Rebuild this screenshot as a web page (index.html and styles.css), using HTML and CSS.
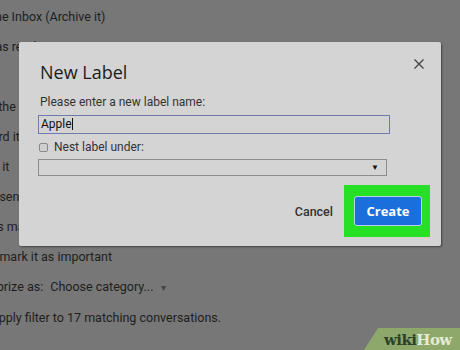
FILE: index.html
```html
<!DOCTYPE html>
<html lang="en">
<head>
  <meta charset="UTF-8">
  <title>New Label</title>
  <link rel="stylesheet" href="styles.css">
</head>
<body>

  <ul class="filters">
    <li>Skip the Inbox (Archive it)</li>
    <li>Mark as read</li>
    <li>Star it</li>
    <li>Apply the label:</li>
    <li>Forward it</li>
    <li>Delete it</li>
    <li>Never send it to Spam</li>
    <li>Always mark it as important</li>
    <li>Never mark it as important</li>
    <li>Categorize as: <span class="category">Choose category... <span class="caret">&#9662;</span></span></li>
    <li>Also apply filter to 17 matching conversations.</li>
  </ul>

  <div class="dialog">
    <h2 class="dialog-title">New Label</h2>
    <svg class="close" width="10" height="10" viewBox="0 0 10 10">
      <path d="M0.5 0.5 L9.5 9.5 M9.5 0.5 L0.5 9.5" stroke="#444" stroke-width="1.3"/>
    </svg>

    <div class="field-label">Please enter a new label name:</div>
    <div class="text-input">Apple<span class="cursor"></span></div>

    <div class="nest-row">
      <span class="checkbox"></span>
      <span>Nest label under:</span>
    </div>
    <div class="select"><span class="arrow">&#9660;</span></div>

    <div class="dialog-footer">
      <button class="cancel">Cancel</button>
      <div class="highlight">
        <button class="create">Create</button>
      </div>
    </div>
  </div>

  <div class="wikihow"><span class="wiki">wiki</span><span class="how">How</span></div>

</body>
</html>
```

FILE: styles.css
```css
body {
  margin: 0;
  padding: 0;
  width: 460px;
  height: 350px;
  overflow: hidden;
  background-color: #777777;
  font-family: Roboto, "Liberation Sans", sans-serif;
  position: relative;
}

.filters {
  list-style: none;
  margin: 0 0 0 -36px;
  padding: 2px 0 0 0;
  font-size: 12.5px;
  line-height: 30px;
  color: #1e1e1e;
  white-space: nowrap;
}

.category {
  margin-left: 4px;
}

.caret {
  font-size: 10px;
  color: #444;
  margin-left: 4px;
}

/* dialog */
.dialog {
  position: absolute;
  left: 19px;
  top: 42px;
  width: 384px;
  padding: 18px 19px 9px 19px;
  background-color: #d4d4d4;
  box-shadow: 1px 1px 2px rgba(0, 0, 0, 0.45);
  border-radius: 2px;
  color: #222;
}

.dialog-title {
  margin: 0;
  padding-left: 2px;
  font-family: "Open Sans", Roboto, sans-serif;
  font-weight: normal;
  font-size: 18px;
  line-height: 24px;
  color: #1c1c1c;
}

.close {
  position: absolute;
  top: 17px;
  right: 17px;
}

.field-label {
  margin-top: 11px;
  padding-left: 2px;
  font-size: 12px;
  line-height: 15px;
  color: #333;
}

.text-input {
  margin-top: 5px;
  width: 346px;
  height: 15px;
  padding: 1px 2px;
  border: 1px solid #6f7cab;
  font-size: 12px;
  line-height: 15px;
  color: #111;
}

.cursor {
  display: inline-block;
  width: 1px;
  height: 12px;
  background-color: #111;
  vertical-align: -2px;
}

.nest-row {
  margin-top: 4px;
  height: 18px;
  display: flex;
  align-items: center;
  gap: 6px;
  padding-left: 1px;
  font-size: 12px;
  color: #333;
}

.checkbox {
  width: 7px;
  height: 7px;
  border: 1px solid #8a8a8a;
  border-radius: 2px;
  background-color: #cfcfcf;
}

.select {
  margin-top: 3px;
  width: 347px;
  height: 15px;
  border: 1px solid #8c8c8c;
  display: flex;
  justify-content: flex-end;
  align-items: center;
}

.arrow {
  font-size: 8px;
  color: #111;
  margin-right: 7px;
}

.dialog-footer {
  margin-top: 9px;
  margin-right: -8px;
  display: flex;
  justify-content: flex-end;
  align-items: center;
  gap: 7px;
}

.cancel {
  border: none;
  background: none;
  padding: 4px 4px;
  font-family: Roboto, sans-serif;
  font-size: 12.5px;
  font-weight: 500;
  color: #333;
}

.highlight {
  background-color: #25e025;
  padding: 11px 8px 11px 10px;
}

.create {
  display: block;
  width: 68px;
  height: 30px;
  border: 1px solid #bcd3f0;
  border-radius: 3px;
  background-color: #1a6fdc;
  color: #ffffff;
  font-family: "Open Sans", Roboto, sans-serif;
  font-size: 13px;
  font-weight: bold;
}

/* watermark */
.wikihow {
  position: absolute;
  right: 0;
  bottom: 0;
  width: 96px;
  height: 22px;
  padding-left: 20px;
  box-sizing: border-box;
  background-color: #8ea86b;
  clip-path: polygon(14px 0, 100% 0, 100% 100%, 0 100%);
  font-family: "DejaVu Serif", serif;
  font-weight: bold;
  font-size: 15px;
  line-height: 24px;
  letter-spacing: -0.6px;
  white-space: nowrap;
}

.wiki {
  color: #2d4128;
}

.how {
  color: #e3ead6;
}
```
